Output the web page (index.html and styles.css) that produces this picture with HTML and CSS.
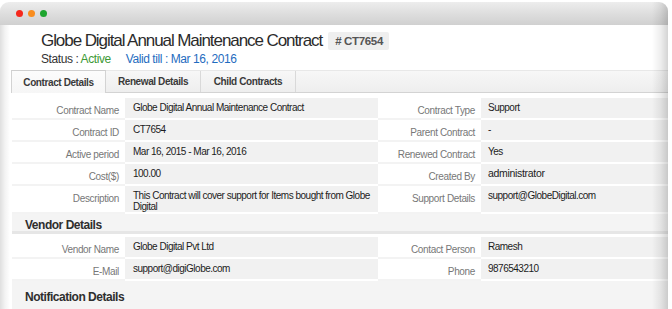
FILE: index.html
```html
<!DOCTYPE html>
<html lang="en">
<head>
<meta charset="utf-8">
<title>Globe Digital Annual Maintenance Contract</title>
<link rel="stylesheet" href="styles.css">
</head>
<body>
<div class="window">
  <div class="titlebar">
    <span class="dot dot-red"></span>
    <span class="dot dot-amber"></span>
    <span class="dot dot-green"></span>
  </div>
  <div class="page">
    <header class="head">
      <div class="title-row">
        <h1 class="title">Globe Digital Annual Maintenance Contract</h1>
        <span class="badge"># CT7654</span>
      </div>
      <div class="status">
        <span>Status : <span class="active">Active</span></span>
        <span class="valid">Valid till : Mar 16, 2016</span>
      </div>
    </header>

    <nav class="tabs">
      <div class="tab tab-on">Contract Details</div>
      <div class="tab">Renewal Details</div>
      <div class="tab">Child Contracts</div>
    </nav>

    <div class="grid">
      <div class="lbl">Contract Name</div>
      <div class="val">Globe Digital Annual Maintenance Contract</div>
      <div class="lbl">Contract Type</div>
      <div class="val">Support</div>

      <div class="lbl">Contract ID</div>
      <div class="val">CT7654</div>
      <div class="lbl">Parent Contract</div>
      <div class="val">-</div>

      <div class="lbl">Active period</div>
      <div class="val">Mar 16, 2015 - Mar 16, 2016</div>
      <div class="lbl">Renewed Contract</div>
      <div class="val">Yes</div>

      <div class="lbl">Cost($)</div>
      <div class="val">100.00</div>
      <div class="lbl">Created By</div>
      <div class="val val-lg">administrator</div>

      <div class="lbl">Description</div>
      <div class="val">This Contract will cover support for Items bought from Globe Digital</div>
      <div class="lbl">Support Details</div>
      <div class="val">support@GlobeDigital.com</div>
    </div>

    <div class="band">Vendor Details</div>

    <div class="grid">
      <div class="lbl">Vendor Name</div>
      <div class="val">Globe Digital Pvt Ltd</div>
      <div class="lbl">Contact Person</div>
      <div class="val">Ramesh</div>

      <div class="lbl">E-Mail</div>
      <div class="val">support@digiGlobe.com</div>
      <div class="lbl">Phone</div>
      <div class="val">9876543210</div>
    </div>

    <div class="band band-last">Notification Details</div>
  </div>
</div>
</body>
</html>
```

FILE: styles.css
```css
* { box-sizing: border-box; }

html, body {
  margin: 0;
  padding: 0;
  background: #fff;
}

body {
  width: 672px;
  height: 309px;
  overflow: hidden;
  font-family: "Liberation Sans", Arial, Helvetica, sans-serif;
  letter-spacing: -0.025em;
  color: #222;
}

.window {
  position: relative;
  width: 668px;
  height: 307px;
  margin-top: 2px;
  border-radius: 9px 9px 0 0;
  overflow: hidden;
  background: #fff;
}

.window::after {
  content: "";
  position: absolute;
  top: 0;
  right: 0;
  bottom: 0;
  width: 16px;
  pointer-events: none;
  background: linear-gradient(to right, rgba(0,0,0,0) 0, rgba(0,0,0,0.07) 55%, rgba(0,0,0,0.17) 100%);
}

.titlebar {
  height: 23px;
  display: flex;
  align-items: center;
  gap: 5px;
  padding-left: 16px;
  background: linear-gradient(to bottom, #ededed 0, #dedede 50%, #d0d0d0 100%);
}

.dot {
  width: 7px;
  height: 7px;
  border-radius: 50%;
}
.dot-red { background: #f5281c; }
.dot-amber { background: #f98d1e; }
.dot-green { background: #1ea52f; }

.page {
  height: 284px;
  padding: 0 0 0 11px;
  background: linear-gradient(to right, #dfdfdf 0, #f3f3f3 5px, #fff 10px);
}

.head {
  padding: 5px 0 0 30px;
}

.title-row {
  display: flex;
  align-items: center;
  height: 22px;
}

.title {
  margin: 0;
  font-size: 17px;
  font-weight: normal;
  line-height: 22px;
  letter-spacing: -0.063em;
  color: #2b2b2b;
}

.badge {
  margin-left: 6px;
  height: 18px;
  padding: 0 6px 0 7px;
  display: flex;
  align-items: center;
  background: #efefef;
  border-radius: 2px;
  font-size: 11.5px;
  font-weight: bold;
  color: #555;
  letter-spacing: -0.03em;
}

.status {
  display: flex;
  gap: 15px;
  font-size: 12px;
  line-height: 14px;
  letter-spacing: -0.035em;
  color: #333;
}
.active { color: #3d9a35; }
.valid { color: #1f6cc0; }

.tabs {
  display: flex;
  height: 23px;
  margin-top: 4px;
  background: linear-gradient(to bottom, #f7f7f7, #eeeeee);
  border-top: 1px solid #e8e8e8;
  border-bottom: 1px solid #d3d3d3;
}

.tab {
  width: 95px;
  display: flex;
  align-items: center;
  justify-content: center;
  border-right: 1px solid #d9d9d9;
  font-size: 10px;
  font-weight: bold;
  color: #3a3a3a;
}

.tab-on {
  margin-top: -1px;
  margin-bottom: -1px;
  background: linear-gradient(to bottom, #fcfcfc, #f6f6f6);
  border-left: 1px solid #d3d3d3;
  border-top: 1px solid #cfcfcf;
  border-right: 1px solid #d3d3d3;
}

.grid {
  display: grid;
  grid-template-columns: 113px 253px 103px 1fr;
  margin: 5px 0 0 1px;
  font-size: 10px;
  line-height: 11px;
}

.lbl {
  min-height: 22px;
  padding: 7px 6px 0 4px;
  text-align: right;
  letter-spacing: -0.035em;
  color: #777;
  background: #fff;
  border-bottom: 2px solid #f3f3f3;
}

.val {
  min-height: 22px;
  padding: 4px 4px 0 8px;
  letter-spacing: -0.05em;
  color: #1c1c1c;
  background: #f1f1f1;
  border-bottom: 2px solid #fff;
}

.grid .val:nth-child(4n) {
  padding-left: 7px;
}

.val-lg {
  font-size: 10.5px;
  letter-spacing: -0.03em;
}

.band {
  height: 20px;
  margin-left: 1px;
  padding: 4px 0 0 13px;
  background: #f4f4f4;
  border-bottom: 3px solid #e6e6e6;
  font-size: 12px;
  font-weight: bold;
  line-height: 14px;
  letter-spacing: -0.04em;
  color: #2e2e2e;
}
.band + .grid {
  margin-top: 3px;
}

.band-last {
  height: 30px;
  padding-top: 9px;
  border-bottom: 0;
}
```
